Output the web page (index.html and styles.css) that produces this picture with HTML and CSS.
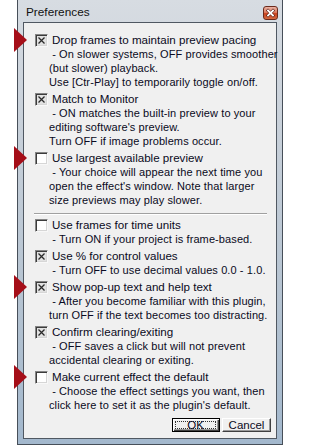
FILE: index.html
```html
<!DOCTYPE html>
<html>
<head>
<meta charset="utf-8">
<title>Preferences</title>
<link rel="stylesheet" href="styles.css">
</head>
<body>
<div class="window">
  <div class="titlebar">
    <span class="title">Preferences</span>
    <span class="close"><svg viewBox="0 0 15 14" width="15" height="14"><path d="M5 4.5L10 9.5M10 4.5L5 9.5" stroke="#5a1a10" stroke-width="3" stroke-linecap="square"/><path d="M5 4.5L10 9.5M10 4.5L5 9.5" stroke="#fff" stroke-width="1.8" stroke-linecap="square"/></svg></span>
  </div>
  <div class="panel">
    <div class="opt">
      <svg class="arrow" viewBox="0 0 13 24" width="13" height="24"><polygon points="0,0 13,12 0,24"/></svg>
      <div class="row"><span class="cb checked"><svg viewBox="0 0 9 9" width="9" height="9"><path d="M1.5 1.5L7.5 7.5M7.5 1.5L1.5 7.5"/></svg></span><span class="lbl">Drop frames to maintain preview pacing</span></div>
      <div class="desc">&nbsp;- On slower systems, OFF provides smoother<br>(but slower) playback.<br>Use [Ctr-Play] to temporarily toggle on/off.</div>
    </div>
    <div class="opt">
      <div class="row"><span class="cb checked"><svg viewBox="0 0 9 9" width="9" height="9"><path d="M1.5 1.5L7.5 7.5M7.5 1.5L1.5 7.5"/></svg></span><span class="lbl">Match to Monitor</span></div>
      <div class="desc">&nbsp;- ON matches the built-in preview to your<br>editing software's preview.<br>Turn OFF if image problems occur.</div>
    </div>
    <div class="opt">
      <svg class="arrow" viewBox="0 0 13 24" width="13" height="24"><polygon points="0,0 13,12 0,24"/></svg>
      <div class="row"><span class="cb"></span><span class="lbl">Use largest available preview</span></div>
      <div class="desc">&nbsp;- Your choice will appear the next time you<br>open the effect's window. Note that larger<br>size previews may play slower.</div>
    </div>
    <div class="sep"></div>
    <div class="opt first">
      <div class="row"><span class="cb"></span><span class="lbl">Use frames for time units</span></div>
      <div class="desc">&nbsp;- Turn ON if your project is frame-based.</div>
    </div>
    <div class="opt">
      <div class="row"><span class="cb checked"><svg viewBox="0 0 9 9" width="9" height="9"><path d="M1.5 1.5L7.5 7.5M7.5 1.5L1.5 7.5"/></svg></span><span class="lbl">Use % for control values</span></div>
      <div class="desc">&nbsp;- Turn OFF to use decimal values 0.0 - 1.0.</div>
    </div>
    <div class="opt">
      <svg class="arrow" viewBox="0 0 13 24" width="13" height="24"><polygon points="0,0 13,12 0,24"/></svg>
      <div class="row"><span class="cb checked"><svg viewBox="0 0 9 9" width="9" height="9"><path d="M1.5 1.5L7.5 7.5M7.5 1.5L1.5 7.5"/></svg></span><span class="lbl">Show pop-up text and help text</span></div>
      <div class="desc">&nbsp;- After you become familiar with this plugin,<br>turn OFF if the text becomes too distracting.</div>
    </div>
    <div class="opt">
      <div class="row"><span class="cb checked"><svg viewBox="0 0 9 9" width="9" height="9"><path d="M1.5 1.5L7.5 7.5M7.5 1.5L1.5 7.5"/></svg></span><span class="lbl">Confirm clearing/exiting</span></div>
      <div class="desc">&nbsp;- OFF saves a click but will not prevent<br>accidental clearing or exiting.</div>
    </div>
    <div class="opt">
      <svg class="arrow" viewBox="0 0 13 24" width="13" height="24"><polygon points="0,0 13,12 0,24"/></svg>
      <div class="row"><span class="cb"></span><span class="lbl">Make current effect the default</span></div>
      <div class="desc">&nbsp;- Choose the effect settings you want, then<br>click here to set it as the plugin's default.</div>
    </div>
    <div class="buttons">
      <button class="btn default"><span class="focus">OK</span></button>
      <button class="btn">Cancel</button>
    </div>
  </div>
</div>
</body>
</html>
```

FILE: styles.css
```css
html, body {
  margin: 0;
  padding: 0;
  background: #ffffff;
}
body {
  width: 285px;
  height: 445px;
  overflow: hidden;
  font-family: "Liberation Sans", Arial, sans-serif;
  font-size: 11.6px;
  color: #0a0a22;
}
.window {
  margin-left: 17px;
  width: 266px;
  height: 445px;
  box-sizing: border-box;
  border: 1px solid #474f59;
  border-top: none;
  padding: 0 5px 5px 5px;
  background: linear-gradient(to bottom, #d7dce2 0, #c9d1da 120px, #b5c3d1 300px, #a3b8cd 100%);
  display: flex;
  flex-direction: column;
}
.titlebar {
  height: 22px;
  box-sizing: border-box;
  padding: 3px 0 0 3px;
  display: flex;
  justify-content: space-between;
  align-items: flex-start;
  flex: none;
}
.title {
  font-size: 11.8px;
  line-height: 19px;
  color: #111111;
}
.close {
  margin-top: 3px;
  margin-right: -1px;
  width: 15px;
  height: 14px;
  box-sizing: border-box;
  border: 1px solid #6b2a1c;
  border-radius: 3px;
  background: linear-gradient(to bottom, #eab3a4 0, #dd7c62 45%, #c8431f 55%, #d46a42 100%);
  display: flex;
  align-items: center;
  justify-content: center;
}
.close svg {
  display: block;
  margin: -1px;
}
.panel {
  flex: 1;
  border: 1px solid #505862;
  background: #f0f0f0;
  padding: 10px 5px 0 11px;
}
.opt {
  position: relative;
  margin-top: 3px;
}
.opt:first-child {
  margin-top: 0;
}
.opt.first {
  margin-top: 0;
}
.arrow {
  position: absolute;
  left: -21px;
  top: -5px;
  fill: #a50e18;
}
.row {
  display: flex;
  align-items: center;
  height: 14px;
  line-height: 14px;
  white-space: nowrap;
}
.cb {
  width: 13px;
  height: 13px;
  box-sizing: border-box;
  border: 1px solid;
  border-color: #858585 #f8f8f8 #f8f8f8 #858585;
  box-shadow: inset 1px 1px #3c3c3c, inset -1px -1px #d6d6d6;
  background: #ffffff;
  margin-right: 4px;
  flex: none;
  display: flex;
  align-items: center;
  justify-content: center;
}
.cb.checked {
  background: #e2e2e2;
}
.cb svg {
  display: block;
  stroke: #2a2a2a;
  stroke-width: 1.3;
  fill: none;
}
.desc {
  margin-left: 14px;
  font-size: 11px;
  letter-spacing: 0.1px;
  line-height: 14px;
  white-space: nowrap;
}
.sep {
  margin: 6px 4px 3px -1px;
  border-top: 1px solid #a0a0a0;
  border-bottom: 1px solid #ffffff;
  height: 0;
}
.buttons {
  display: flex;
  justify-content: flex-end;
  gap: 2px;
  margin-top: 6px;
}
.btn {
  height: 14px;
  box-sizing: border-box;
  margin: 0;
  padding: 0;
  background: #f0f0f0;
  border: 1px solid;
  border-color: #ffffff #404040 #404040 #ffffff;
  box-shadow: inset -1px -1px #9a9a9a;
  font-family: "Liberation Sans", Arial, sans-serif;
  font-size: 11.5px;
  line-height: 11px;
  color: #0a0a22;
  width: 49px;
  display: flex;
  align-items: center;
  justify-content: center;
}
.btn.default {
  width: 48px;
  border: 1px solid #000000;
  box-shadow: inset 1px 1px #ffffff, inset -1px -1px #404040, inset -2px -2px #9a9a9a;
  padding: 1px;
}
.focus {
  flex: 1;
  align-self: stretch;
  margin: 1px 2px 1px 1px;
  border: 1px dotted #303030;
  display: flex;
  align-items: center;
  justify-content: center;
  line-height: 9px;
}
```
